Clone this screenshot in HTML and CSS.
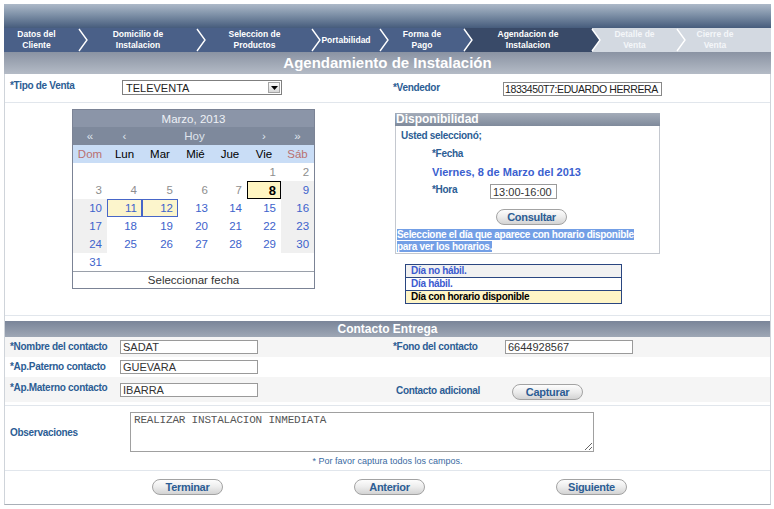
FILE: index.html
```html
<!DOCTYPE html>
<html lang="es">
<head>
<meta charset="utf-8">
<title>Agendamiento de Instalación</title>
<link rel="stylesheet" href="styles.css">
</head>
<body>
<div class="page">
  <div class="topbar"></div>
  <div class="wizard">
    <div class="step done w1">Datos del<br>Cliente</div>
    <svg class="chev" viewBox="0 0 12 24" width="12" height="24"><rect width="12" height="24" fill="#4a6088"/><polyline points="2,1 10,12 2,23" fill="none" stroke="#fff" stroke-width="1.4"/></svg>
    <div class="step done w2">Domicilio de<br>Instalacion</div>
    <svg class="chev" viewBox="0 0 12 24" width="12" height="24"><rect width="12" height="24" fill="#4a6088"/><polyline points="2,1 10,12 2,23" fill="none" stroke="#fff" stroke-width="1.4"/></svg>
    <div class="step done w3">Seleccion de<br>Productos</div>
    <svg class="chev" viewBox="0 0 12 24" width="12" height="24"><rect width="12" height="24" fill="#4a6088"/><polyline points="2,1 10,12 2,23" fill="none" stroke="#fff" stroke-width="1.4"/></svg>
    <div class="step done w4">Portabilidad</div>
    <svg class="chev" viewBox="0 0 12 24" width="12" height="24"><rect width="12" height="24" fill="#4a6088"/><polyline points="2,1 10,12 2,23" fill="none" stroke="#fff" stroke-width="1.4"/></svg>
    <div class="step done w5">Forma de<br>Pago</div>
    <svg class="chev" viewBox="0 0 12 24" width="12" height="24"><polygon points="0,0 2,0 10,12 2,24 0,24" fill="#4a6088"/><polygon points="2,0 12,0 12,24 2,24 10,12" fill="#394a68"/><polyline points="2,1 10,12 2,23" fill="none" stroke="#fff" stroke-width="1.4"/></svg>
    <div class="step active w6">Agendacion de<br>Instalacion</div>
    <svg class="chev" viewBox="0 0 12 24" width="12" height="24"><polygon points="0,0 2,0 10,12 2,24 0,24" fill="#394a68"/><polygon points="2,0 12,0 12,24 2,24 10,12" fill="#d3d9e1"/><polyline points="2,1 10,12 2,23" fill="none" stroke="#fff" stroke-width="1.4"/></svg>
    <div class="step future w7">Detalle de<br>Venta</div>
    <svg class="chev" viewBox="0 0 12 24" width="12" height="24"><rect width="12" height="24" fill="#d3d9e1"/><polyline points="2,1 10,12 2,23" fill="none" stroke="#fff" stroke-width="1.4"/></svg>
    <div class="step future w8">Cierre de<br>Venta</div>
  </div>
  <div class="title">Agendamiento de Instalación</div>

  <div class="content">
    <div class="row1">
      <div class="lbl lbl-tipo">*Tipo de Venta</div>
      <div class="select">
        <span>TELEVENTA</span>
        <span class="arrow"><svg width="7" height="4" viewBox="0 0 7 4"><polygon points="0,0 7,0 3.5,4" fill="#000"/></svg></span>
      </div>
      <div class="lbl lbl-vend">*Vendedor</div>
      <input class="inp inp-vend" type="text" value="1833450T7:EDUARDO HERRERA" readonly>
    </div>

    <div class="sched">
      <div class="cal-col">
        <table class="cal">
          <colgroup><col class="c34"><col class="c35"><col class="c36"><col class="c35"><col class="c34"><col class="c34"><col class="c33"></colgroup>
          <tr class="cal-title"><td colspan="7">Marzo, 2013</td></tr>
          <tr class="cal-nav"><td>«</td><td>‹</td><td colspan="3">Hoy</td><td>›</td><td>»</td></tr>
          <tr class="cal-days"><td class="we">Dom</td><td>Lun</td><td>Mar</td><td>Mié</td><td>Jue</td><td>Vie</td><td class="we">Sáb</td></tr>
          <tr class="wk"><td></td><td></td><td></td><td></td><td></td><td class="past">1</td><td class="past">2</td></tr>
          <tr class="wk"><td class="past">3</td><td class="past">4</td><td class="past">5</td><td class="past">6</td><td class="past">7</td><td class="sel">8</td><td class="nh">9</td></tr>
          <tr class="wk"><td class="nh">10</td><td class="av">11</td><td class="av">12</td><td>13</td><td>14</td><td>15</td><td class="nh">16</td></tr>
          <tr class="wk"><td class="nh">17</td><td>18</td><td>19</td><td>20</td><td>21</td><td>22</td><td class="nh">23</td></tr>
          <tr class="wk"><td class="nh">24</td><td>25</td><td>26</td><td>27</td><td>28</td><td>29</td><td class="nh">30</td></tr>
          <tr class="wk"><td>31</td><td></td><td></td><td></td><td></td><td></td><td></td></tr>
          <tr class="cal-foot"><td colspan="7">Seleccionar fecha</td></tr>
        </table>
      </div>
      <div class="disp-col">
        <div class="disp">
          <div class="disp-head">Disponibilidad</div>
          <div class="disp-body">
            <div class="dline lbl">Usted seleccionó;</div>
            <div class="dline lbl ind">*Fecha</div>
            <div class="dline ind fecha">Viernes, 8 de Marzo del 2013</div>
            <div class="dline ind hora"><span class="lbl lbl-hora">*Hora</span><input class="inp inp-hora" type="text" value="13:00-16:00" readonly></div>
            <div class="btn-line"><button class="btn" type="button">Consultar</button></div>
            <div class="hint"><span class="hl">Seleccione el día que aparece con horario disponible</span><br><span class="hl">para ver los horarios.</span></div>
          </div>
        </div>
        <table class="legend">
          <tr><td class="lg-nh">Día no hábil.</td></tr>
          <tr><td class="lg-h">Día hábil.</td></tr>
          <tr><td class="lg-av">Día con horario disponible</td></tr>
        </table>
      </div>
    </div>

    <div class="contact">
      <div class="sec-head">Contacto Entrega</div>
      <div class="crow alt r1">
        <div class="lbl">*Nombre del contacto</div>
        <input class="inp inp-c" type="text" value="SADAT" readonly>
        <div class="lbl">*Fono del contacto</div>
        <input class="inp inp-f" type="text" value="6644928567" readonly>
      </div>
      <div class="crow r2">
        <div class="lbl">*Ap.Paterno contacto</div>
        <input class="inp inp-c" type="text" value="GUEVARA" readonly>
        <div></div>
        <div></div>
      </div>
      <div class="crow alt r3">
        <div class="lbl lbl-mat">*Ap.Materno contacto</div>
        <input class="inp inp-c" type="text" value="IBARRA" readonly>
        <div class="lbl lbl-adic">Contacto adicional</div>
        <div><button class="btn btn-cap" type="button">Capturar</button></div>
      </div>
    </div>

    <div class="obs">
      <div class="lbl lbl-obs">Observaciones</div>
      <div><textarea class="ta" readonly>REALIZAR INSTALACION INMEDIATA</textarea></div>
      <div class="note">* Por favor captura todos los campos.</div>
    </div>

    <div class="btns">
      <button class="btn" type="button">Terminar</button>
      <button class="btn" type="button">Anterior</button>
      <button class="btn" type="button">Siguiente</button>
    </div>
  </div>
</div>
</body>
</html>
```
FILE: styles.css
```css
* { box-sizing: border-box; }
body { margin: 0; background: #fff; font-family: "Liberation Sans", Arial, sans-serif; }
.page { width: 767px; margin: 4px 0 0 4px; }

.topbar { height: 24px; background: linear-gradient(#adb9c8, #8395ab 40%, #465c7c); }

.wizard { display: flex; height: 24px; }
.step { display: flex; align-items: center; justify-content: center; text-align: center; color: #fff; font-size: 8.5px; font-weight: bold; line-height: 11px; padding-right: 8px; }
.done { background: #4a6088; }
.active { background: #394a68; }
.future { background: #d3d9e1; color: #f4f6f9; }
.w1 { width: 73px; }
.w2 { width: 106px; }
.w3 { width: 103px; }
.w4 { width: 56px; }
.w5 { width: 72px; }
.w6 { width: 116px; }
.w7 { width: 73px; }
.w8 { flex: 1; padding-right: 28px; }
.chev { display: block; flex: none; }

.title { height: 22px; background: linear-gradient(#8a93a3, #b4bbc6); color: #fff; font-weight: bold; font-size: 15px; line-height: 22px; text-align: center; }

.content { border: 1px solid #cfd4da; border-top: 0; border-bottom-color: #a9afb7; }

.lbl { font-weight: bold; font-size: 10px; letter-spacing: -0.3px; color: #2c5d94; line-height: 12px; }

.inp { display: block; margin: 0; height: 14px; border: 1px solid #9a9a9a; padding: 0 2px; font: 11px "Liberation Sans", Arial, sans-serif; color: #333; background: #fff; outline: none; }

.row1 { display: grid; grid-template-columns: 117px 266px 115px 1fr; align-items: start; height: 29px; border-bottom: 1px solid #e1e6ec; }
.row1 .lbl { padding-left: 5px; }
.lbl-tipo { margin-top: 6px; }
.lbl-vend { margin-top: 8px; }
.select { display: flex; align-items: center; justify-content: space-between; width: 160px; height: 15px; margin-top: 6px; border: 1px solid #7f7f7f; padding: 0 1px 0 3px; font-size: 11px; color: #222; }
.arrow { display: flex; align-items: center; justify-content: center; width: 12px; height: 11px; border: 1px solid #a5a5a5; background: linear-gradient(#fafafa, #d8d8d8); }
.inp-vend { width: 159px; margin-top: 8px; padding: 0 1px; font-size: 10.5px; letter-spacing: -0.4px; color: #222; border-color: #888; }

.sched { display: grid; grid-template-columns: 384px 1fr; height: 213px; border-bottom: 1px solid #e1e6ec; }

.cal { margin: 6px 0 0 67px; width: 243px; border: 1px solid #7b8395; border-collapse: separate; border-spacing: 0; table-layout: fixed; font-size: 11px; }
.c33 { width: 33px; } .c34 { width: 34px; } .c35 { width: 35px; } .c36 { width: 36px; }
.cal td { padding: 0; }
.cal-title td { height: 17px; background: #8b95a8; color: #eef1f6; text-align: center; font-size: 11.5px; }
.cal-nav td { height: 18px; background: #7e899c; color: #dfe4ec; text-align: center; font-size: 11.5px; }
.cal-days td { height: 18px; background: #c9ddf6; color: #000; text-align: center; font-size: 11.5px; }
.cal-days td.we { color: #b97070; }
.wk td { height: 18px; text-align: right; padding-right: 5px; color: #3d62cc; font-size: 11.5px; }
.wk td.past { color: #8e8e8e; }
.wk td.nh { background: #f0f0f0; }
.wk td.sel { background: #fff5c2; box-shadow: inset 0 0 0 1px #000; color: #000; font-weight: bold; font-size: 13px; }
.wk td.av { background: #fcf5cc; box-shadow: inset 0 0 0 1px #4766c8; }
.cal-foot td { height: 17px; border-top: 1px solid #9aa0aa; text-align: center; color: #333; font-size: 11.5px; }

.disp { margin: 10px 0 0 6px; width: 265px; }
.disp-head { height: 13px; background: linear-gradient(#a4acb9, #7f8a9b); color: #fff; font-weight: bold; font-size: 12px; line-height: 13px; padding-left: 1px; }
.disp-body { height: 128px; border: 1px solid #c4c8cf; border-top: 0; padding: 1px 0 0 0; }
.dline { height: 18px; line-height: 18px; padding-left: 5px; }
.ind { padding-left: 36px; }
.fecha { font-weight: bold; font-size: 11px; color: #3b5fcf; }
.hora { display: flex; align-items: flex-start; }
.lbl-hora { line-height: 18px; width: 58px; }
.inp-hora { width: 67px; height: 15px; margin-top: 3px; }
.btn-line { margin-top: 10px; padding-left: 100px; height: 16px; }
.hint { margin-top: 4px; padding-left: 1px; font-weight: bold; font-size: 10px; letter-spacing: -0.3px; line-height: 12px; }
.hl { background: #739fe6; color: #fff; }

.btn { display: block; width: 71px; height: 16px; margin: 0; padding: 0; border: 1px solid #a3a3a3; border-radius: 8px; background: linear-gradient(#fdfdfd, #ececec 50%, #d3d3d3); font: bold 11px "Liberation Sans", Arial, sans-serif; letter-spacing: -0.3px; color: #2c5d94; line-height: 14px; text-align: center; }

.legend { margin: 10px 0 0 16px; width: 217px; border-collapse: collapse; }
.legend td { border: 1px solid #2a4680; height: 13px; line-height: 12px; padding: 0 0 0 5px; font-weight: bold; font-size: 10px; letter-spacing: -0.3px; }
.lg-nh { background: #f1f1f1; color: #3b5bd0; }
.lg-h { background: #fff; color: #3b5bd0; }
.lg-av { background: #fff5c6; color: #000; }

.contact { padding: 5px 0 3px; border-bottom: 1px solid #e1e6ec; }
.sec-head { height: 16px; background: linear-gradient(#7a8599, #9ea7b5); color: #fff; font-weight: bold; font-size: 12px; line-height: 16px; text-align: center; }
.crow { display: grid; grid-template-columns: 115px 268px 117px 1fr; align-items: center; height: 20px; }
.crow.alt { background: #f5f5f5; }
.crow .lbl { padding-left: 5px; }
.crow.r3 { height: 25px; }
.lbl-mat { margin-bottom: 4px; }
.inp-c { width: 138px; }
.inp-f { width: 128px; }
.lbl-adic { padding-left: 8px !important; margin-top: 3px; }
.btn-cap { margin: 4px 0 0 7px; }

.obs { display: grid; grid-template-columns: 125px 1fr; grid-template-rows: 46px 18px; border-bottom: 1px solid #e1e6ec; }
.lbl-obs { padding-left: 5px; margin-top: 21px; }
.ta { display: block; margin: 6px 0 0 0; width: 464px; height: 40px; border: 1px solid #a0a0a0; padding: 1px 3px; font: 11px "Liberation Mono", "Courier New", monospace; letter-spacing: -0.2px; color: #555; resize: both; outline: none; }
.note { grid-column: 1 / -1; text-align: center; font-size: 9px; line-height: 18px; color: #3a6aa2; }

.btns { display: flex; gap: 131px; padding: 8px 0 9px 147px; }
```
